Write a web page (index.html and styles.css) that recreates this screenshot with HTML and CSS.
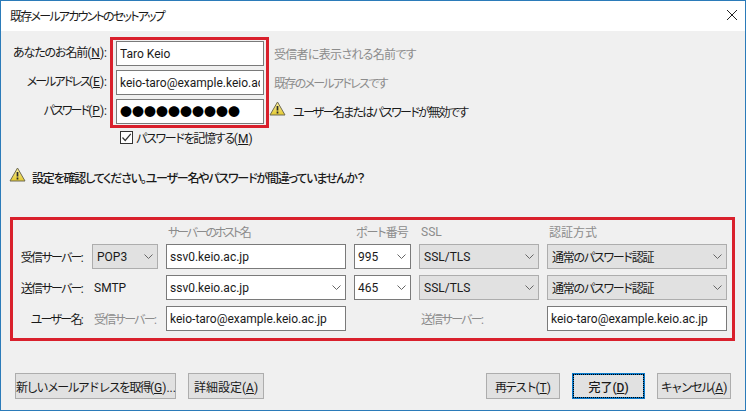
FILE: index.html
```html
<!DOCTYPE html>
<html lang="ja">
<head>
<meta charset="utf-8">
<title>既存メールアカウントのセットアップ</title>
<link rel="stylesheet" href="styles.css">
</head>
<body>
<svg class="defs" width="0" height="0"><defs>
  <linearGradient id="warnfill" x1="0" y1="0" x2="0" y2="1"><stop offset="0" stop-color="#fbf0a0"/><stop offset="1" stop-color="#e3c92f"/></linearGradient>
  <symbol id="warnicon" viewBox="0 0 17 15"><path d="M8.5 1L16 14H1Z" fill="url(#warnfill)" stroke="#6f6b52" stroke-width="1" stroke-linejoin="round"/><path d="M8.5 5v4.6M8.5 10.6v1.8" stroke="#2a2a2a" stroke-width="1.7" fill="none"/></symbol>
  <symbol id="chev" viewBox="0 0 9 5"><path d="M.5 .5l4 4 4-4" stroke="#666" fill="none"/></symbol>
</defs></svg>
<div class="window">
  <header class="titlebar">
    <span class="title">既存メールアカウントのセットアップ</span>
    <svg class="close" width="12" height="12" viewBox="0 0 12 12"><path d="M1 1l10 10M11 1L1 11" stroke="#222" stroke-width="1" fill="none"/></svg>
  </header>
  <main class="content">
    <section class="identity">
      <div class="id-labels">
        <div class="id-label ls-k">あなたのお名前<span class="lat">(<u>N</u>):</span></div>
        <div class="id-label ls-m">メールアドレス<span class="lat">(<u>E</u>):</span></div>
        <div class="id-label ls-m">パスワード<span class="lat">(<u>P</u>):</span></div>
      </div>
      <div class="red-box fields">
        <input class="field" type="text" value="Taro Keio">
        <input class="field" type="text" value="keio-taro@example.keio.ac.jp">
        <div class="field dots">●●●●●●●●●●</div>
      </div>
      <div class="id-notes">
        <div class="note muted ls-a">受信者に表示される名前です</div>
        <div class="note muted ls-c">既存のメールアドレスです</div>
        <div class="note warn-note">
          <svg class="warn" width="17" height="15"><use href="#warnicon"/></svg>
          <span class="ls-c">ユーザー名またはパスワードが無効です</span>
        </div>
      </div>
    </section>
    <label class="remember">
      <span class="checkbox"><svg width="11" height="11" viewBox="0 0 11 11"><path d="M1.5 5.5L4.2 8.5L9.8 1.8" stroke="#333" stroke-width="1.2" fill="none"/></svg></span>
      <span class="ls-n">パスワードを記憶する<span class="lat">(<u>M</u>)</span></span>
    </label>
    <div class="alert">
      <svg class="warn" width="17" height="15"><use href="#warnicon"/></svg>
      <strong class="ls-e">設定を確認してください。ユーザー名やパスワードが間違っていませんか？</strong>
    </div>
    <section class="red-box server-grid">
      <div></div><div></div>
      <div class="head ls-g">サーバーのホスト名</div>
      <div class="head ls-f">ポート番号</div>
      <div class="head">SSL</div>
      <div class="head">認証方式</div>

      <div class="row-label ls-c">受信サーバー:</div>
      <div class="select"><span>POP3</span><svg class="chev" width="9" height="5"><use href="#chev"/></svg></div>
      <input class="field" type="text" value="ssv0.keio.ac.jp">
      <div class="select open"><span>995</span><svg class="chev" width="9" height="5"><use href="#chev"/></svg></div>
      <div class="select"><span>SSL/TLS</span><svg class="chev" width="9" height="5"><use href="#chev"/></svg></div>
      <div class="select"><span class="ls-b">通常のパスワード認証</span><svg class="chev" width="9" height="5"><use href="#chev"/></svg></div>

      <div class="row-label ls-c">送信サーバー:</div>
      <div class="plain">SMTP</div>
      <div class="select open"><span>ssv0.keio.ac.jp</span><svg class="chev" width="9" height="5"><use href="#chev"/></svg></div>
      <div class="select open"><span>465</span><svg class="chev" width="9" height="5"><use href="#chev"/></svg></div>
      <div class="select"><span>SSL/TLS</span><svg class="chev" width="9" height="5"><use href="#chev"/></svg></div>
      <div class="select"><span class="ls-b">通常のパスワード認証</span><svg class="chev" width="9" height="5"><use href="#chev"/></svg></div>

      <div class="row-label ls-c">ユーザー名:</div>
      <div class="plain muted ls-c">受信サーバー:</div>
      <input class="field" type="text" value="keio-taro@example.keio.ac.jp">
      <div></div>
      <div class="plain muted ls-c">送信サーバー:</div>
      <input class="field" type="text" value="keio-taro@example.keio.ac.jp">
    </section>
    <footer class="actions">
      <button class="btn w-new ls-h">新しいメールアドレスを取得<span class="lat">(<u>G</u>)...</span></button>
      <button class="btn w-adv">詳細設定<span class="lat">(<u>A</u>)</span></button>
      <div class="spacer"></div>
      <button class="btn w-retest ls-m">再テスト<span class="lat">(<u>T</u>)</span></button>
      <button class="btn w-done default">完了<span class="lat">(<u>D</u>)</span></button>
      <button class="btn w-cancel ls-m">キャンセル<span class="lat">(<u>A</u>)</span></button>
    </footer>
  </main>
</div>
</body>
</html>
```
FILE: styles.css
```css
* { box-sizing: border-box; }
html, body { margin: 0; padding: 0; }
body {
  width: 746px;
  height: 411px;
  overflow: hidden;
  font-family: Roboto, "Noto Sans CJK JP", sans-serif;
  font-size: 12px;
  color: #1a1a1a;
  font-feature-settings: "palt";
}
.defs { position: absolute; }
.lat { letter-spacing: 0; }
.ls-a { letter-spacing: -0.7px; }
.ls-b { letter-spacing: -1.25px; }
.ls-c { letter-spacing: -1.7px; }
.ls-e { letter-spacing: -1.2px; }
.ls-f { letter-spacing: -1px; }
.ls-g { letter-spacing: -2.2px; }
.ls-h { letter-spacing: -1.7px; }
.ls-k { letter-spacing: -1.1px; }
.ls-m { letter-spacing: -1.9px; }
.ls-n { letter-spacing: -1.3px; }
.window {
  width: 746px;
  height: 411px;
  border: 1px solid #2b7bb9;
  display: flex;
  flex-direction: column;
  background: #f0f0f0;
}
.titlebar {
  height: 30px;
  flex: none;
  background: #fff;
  display: flex;
  align-items: center;
  justify-content: space-between;
  padding: 0 7px 2px 9px;
}
.title { letter-spacing: -1.75px; }
.close { display: block; }
.content {
  flex: 1;
  display: flex;
  flex-direction: column;
  padding: 6px 11px 0 9px;
}
.red-box { border: 3px solid #d9202c; }

.identity { display: flex; align-items: stretch; }
.id-labels {
  width: 97px;
  margin-right: 3px;
  flex: none;
  display: flex;
  flex-direction: column;
  gap: 4px;
  padding-top: 4px;
}
.id-label { height: 25px; white-space: pre; text-align: right; line-height: 25px; }
.note { height: 25px; display: flex; align-items: center; white-space: nowrap; }
.fields {
  width: 159px;
  flex: none;
  display: flex;
  flex-direction: column;
  gap: 4px;
  padding: 1px 2px 1px 3px;
  background: #f0f0f0;
}
.field {
  display: block;
  width: 100%;
  height: 25px;
  margin: 0;
  padding: 0 3px;
  border: 1px solid #7a7a7a;
  background: #fff;
  font: inherit;
  color: #1a1a1a;
  outline: none;
}
.dots {
  font-family: "Noto Sans CJK JP", sans-serif;
  line-height: 23px;
  font-feature-settings: normal;
  color: #000;
  overflow: hidden;
  white-space: nowrap;
}
.id-notes {
  display: flex;
  flex-direction: column;
  gap: 4px;
  padding-top: 4px;
  padding-left: 5px;
}
.muted { color: #8c8c8c; }
.warn-note { margin-left: -5px; gap: 7px; }
.warn-note .warn { margin-bottom: 7px; }
.warn { display: block; flex: none; }

.remember {
  display: flex;
  align-items: center;
  gap: 3px;
  margin: 0 0 0 110px;
  height: 18px;
}
.checkbox {
  width: 13px;
  height: 13px;
  border: 1px solid #333;
  background: #fff;
  display: flex;
  align-items: center;
  justify-content: center;
}
.alert {
  display: flex;
  align-items: center;
  gap: 6px;
  margin-top: 22px;
  margin-left: -1px;
  height: 18px;
}
.alert .warn { margin-bottom: 5px; }
.alert strong { font-weight: 500; }

.server-grid {
  margin-top: 31px;
  width: 725px;
  height: 124px;
  display: grid;
  grid-template-columns: 64px 66px 180px 57px 120px 180px;
  grid-template-rows: 13px 25px 25px 25px;
  column-gap: 8px;
  row-gap: 6px;
  padding: 5px 0 0 7px;
  align-items: center;
}
.head { color: #8c8c8c; padding-left: 2px; white-space: nowrap; }
.row-label { text-align: right; white-space: nowrap; padding-right: 2px; }
.plain { white-space: nowrap; padding-left: 2px; }
.select {
  height: 25px;
  border: 1px solid #adadad;
  background: #e1e1e1;
  display: flex;
  align-items: center;
  justify-content: space-between;
  padding: 0 4px 0 4px;
  white-space: nowrap;
}
.select.open { background: #fff; border-color: #7a7a7a; padding-left: 3px; }

.actions {
  margin-top: auto;
  margin-bottom: 11px;
  padding-left: 5px;
  display: flex;
  gap: 12px;
}
.spacer { flex: 1; }
.btn {
  height: 26px;
  margin: 0;
  padding: 0;
  border: 1px solid #adadad;
  background: #e1e1e1;
  font-family: inherit;
  font-size: 12px;
  color: #1a1a1a;
  white-space: nowrap;
}
.w-new { width: 161px; }
.w-adv { width: 76px; }
.w-retest { width: 74px; }
.w-done { width: 73px; font-weight: 500; }
.w-cancel { width: 74px; margin-right: 3px; }
.default { border: 2px solid #0a78c8; outline: 1px dotted #000; outline-offset: -2px; }
```
